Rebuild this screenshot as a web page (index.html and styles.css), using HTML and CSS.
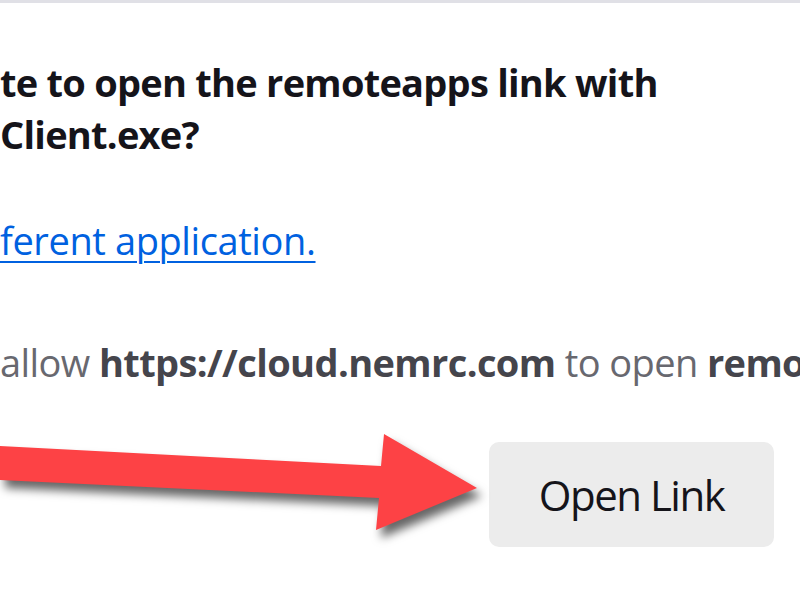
FILE: index.html
```html
<!DOCTYPE html>
<html lang="en">
<head>
<meta charset="utf-8">
<title>Open Link</title>
<link rel="stylesheet" href="styles.css">
</head>
<body>
<div class="topbar"></div>
<main class="dialog">
  <h1 class="title">te to open the remoteapps link with<br>Client.exe?</h1>
  <p class="alt"><a href="#">ferent application.</a></p>
  <p class="permission">allow <b>https://cloud.nemrc.com</b> to open <b>remo</b></p>
  <div class="actions">
    <button class="btn" type="button">Open Link</button>
  </div>
</main>
<svg class="arrow" width="500" height="150" viewBox="0 0 500 150" aria-hidden="true">
  <polygon points="0,26 381,46 384,14 477,68 376,110 379,78 0,60" fill="#fd4245"/>
</svg>
</body>
</html>
```
FILE: styles.css
```css
html, body {
  margin: 0;
  background: #ffffff;
}
body {
  font-family: "Open Sans", "Noto Sans", sans-serif;
  overflow: hidden;
  width: 800px;
  height: 600px;
  position: relative;
}
.topbar {
  height: 3px;
  background: #e0e0e6;
}
.dialog {
  padding: 53px 26px 0 0;
}
.title {
  margin: 0;
  font-weight: 700;
  font-size: 38px;
  line-height: 52px;
  color: #15141a;
  letter-spacing: -0.75px;
}
.alt {
  margin: 54px 0 0;
  font-size: 38px;
  line-height: 52px;
  letter-spacing: -0.4px;
}
.alt a {
  color: #0061e0;
  text-decoration: underline;
  text-decoration-thickness: 2px;
  text-underline-offset: 6px;
}
.permission {
  margin: 70px -26px 0 0;
  font-size: 38px;
  line-height: 52px;
  letter-spacing: -0.6px;
  color: #68686f;
  white-space: nowrap;
  overflow: hidden;
}
.permission b {
  color: #45454c;
}
.actions {
  display: flex;
  justify-content: flex-end;
  margin-top: 54px;
}
.btn {
  width: 285px;
  height: 105px;
  border: none;
  border-radius: 10px;
  background: #ececec;
  font-family: "Open Sans", "Noto Sans", sans-serif;
  font-size: 42px;
  color: #15141a;
  letter-spacing: -1.5px;
  padding: 0;
}
.arrow {
  position: absolute;
  left: 0;
  top: 420px;
  filter: drop-shadow(5px 8px 5px rgba(0, 0, 0, 0.6));
}
```
